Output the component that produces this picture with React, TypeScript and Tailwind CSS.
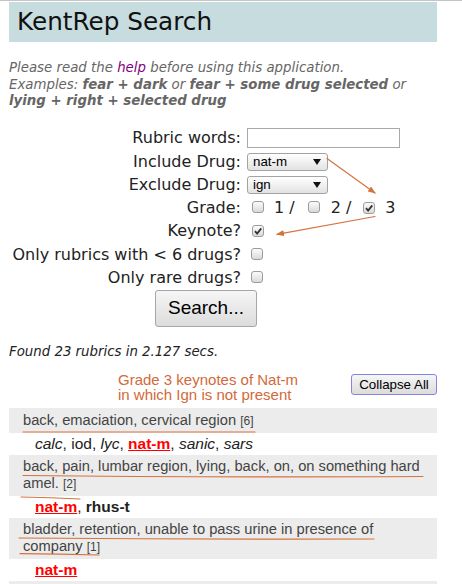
import React from 'react'

// KentRep search page with result list and hand-drawn annotations

type Drug = { name: string; style: 'italic' | 'plain' | 'hit' | 'bold' }

interface Rubric {
    text: string
    count: number
    drugs: Drug[]
}

const rubrics: Rubric[] = [
    {
        text: 'back, emaciation, cervical region',
        count: 6,
        drugs: [
            { name: 'calc', style: 'italic' },
            { name: 'iod', style: 'plain' },
            { name: 'lyc', style: 'italic' },
            { name: 'nat-m', style: 'hit' },
            { name: 'sanic', style: 'italic' },
            { name: 'sars', style: 'italic' },
        ],
    },
    {
        text: 'back, pain, lumbar region, lying, back, on, on something hard amel.',
        count: 2,
        drugs: [
            { name: 'nat-m', style: 'hit' },
            { name: 'rhus-t', style: 'bold' },
        ],
    },
    {
        text: 'bladder, retention, unable to pass urine in presence of company',
        count: 1,
        drugs: [{ name: 'nat-m', style: 'hit' }],
    },
]

function Box({ checked }: { checked?: boolean }) {
    return (
        <span className="inline-flex h-[12px] w-[12px] shrink-0 items-center justify-center rounded-[3px] border border-[#9c9c9c] bg-linear-to-b from-[#fbfbfb] to-[#dadada]">
            {checked && (
                <svg width="10" height="10" viewBox="0 0 10 10">
                    <path d="M2 5.2 L4.1 7.6 L8.3 2.4" fill="none" stroke="#333" strokeWidth="1.8" />
                </svg>
            )}
        </span>
    )
}

function FakeSelect({ value }: { value: string }) {
    return (
        <div className="flex h-[18px] w-[81px] items-center justify-between rounded-[3px] border border-[#a3a3a3] bg-linear-to-b from-[#ffffff] to-[#e2e2e2] pl-[5px] pr-[6px] font-['Liberation_Sans',Arial,sans-serif] text-[13.33px] text-black">
            <span>{value}</span>
            <svg width="8" height="6" viewBox="0 0 8 6">
                <path d="M0 0 H8 L4 6 Z" fill="#111" />
            </svg>
        </div>
    )
}

function Row({ label, children }: { label: string; children: React.ReactNode }) {
    return (
        <>
            <div className="flex h-[23.3px] items-center justify-end pr-[6px] whitespace-nowrap">{label}</div>
            <div className="flex h-[23.3px] items-center">{children}</div>
        </>
    )
}

function DrugName({ drug }: { drug: Drug }) {
    if (drug.style === 'hit') return <span className="font-bold text-[#ff0000] underline">{drug.name}</span>
    if (drug.style === 'bold') return <span className="font-bold">{drug.name}</span>
    if (drug.style === 'italic') return <span className="italic">{drug.name}</span>
    return <span>{drug.name}</span>
}

export default function App() {
    return (
        <div className="relative min-h-[584px] w-[462px] overflow-hidden border-t border-[#c4c4c4] bg-white font-['DejaVu_Sans',sans-serif] text-[#222]">
            <div className="ml-[9px] w-[428px] pt-px">
                {/* Header */}
                <div className="flex h-[40px] items-center bg-[#c6dcdf] pl-[8px] text-[24.7px] text-[#111]">
                    KentRep Search
                </div>

                <p className="mt-[18px] text-[13.33px] leading-[16.7px] italic text-[#666]">
                    Please read the <span className="text-[#800080]">help</span> before using this application.
                    <br />
                    Examples: <b>fear + dark</b> or <b>fear + some drug selected</b> or <b>lying + right + selected drug</b>
                </p>

                {/* Search form */}
                <div className="mt-[16.5px] grid grid-cols-[238px_1fr] text-[16px]">
                    <Row label="Rubric words:">
                        <div className="h-[20px] w-[153px] border border-[#a9a9a9] bg-white" />
                    </Row>
                    <Row label="Include Drug:">
                        <FakeSelect value="nat-m" />
                    </Row>
                    <Row label="Exclude Drug:">
                        <FakeSelect value="ign" />
                    </Row>
                    <Row label="Grade:">
                        <span className="ml-[5px]"><Box /></span>
                        <span className="ml-[10px]">1 /</span>
                        <span className="ml-[13px]"><Box /></span>
                        <span className="ml-[11px]">2 /</span>
                        <span className="ml-[12px]"><Box checked /></span>
                        <span className="ml-[10px]">3</span>
                    </Row>
                    <Row label="Keynote?">
                        <span className="ml-[5px]"><Box checked /></span>
                    </Row>
                    <Row label="Only rubrics with < 6 drugs?">
                        <span className="ml-[4px]"><Box /></span>
                    </Row>
                    <Row label="Only rare drugs?">
                        <span className="ml-[4px]"><Box /></span>
                    </Row>
                </div>

                <button className="ml-[146px] h-[37px] w-[102px] rounded-[3px] border border-[#a6a6a6] bg-linear-to-b from-[#f6f6f6] to-[#dcdcdc] font-['Liberation_Sans',Arial,sans-serif] text-[19px] text-black">
                    Search...
                </button>

                <p className="mt-[17px] text-[13.33px] leading-[16.7px] italic text-[#222]">
                    Found 23 rubrics in 2.127 secs.
                </p>

                {/* Results heading */}
                <div className="mt-[12px] flex items-start font-['Liberation_Sans',Arial,sans-serif]">
                    <div className="ml-[109px] text-[15px] leading-[15px] text-[#d2693a]">
                        Grade 3 keynotes of Nat-m
                        <br />
                        in which Ign is not present
                    </div>
                    <button className="mt-[2px] ml-auto h-[21px] w-[86px] rounded-[3px] border-[1.5px] border-[#8484e4] bg-linear-to-b from-[#f6f6f6] to-[#dcdcdc] text-[13.33px] text-black">
                        Collapse All
                    </button>
                </div>

                {/* Rubric list */}
                <div className="mt-[6px] font-['Liberation_Sans',Arial,sans-serif]">
                    {rubrics.map((r) => (
                        <div key={r.text}>
                            <div className="bg-[#ececec] py-[3.5px] pr-[14px] pl-[14px] text-[14.7px] leading-[16.5px] text-[#444]">
                                {r.text} <span className="text-[12px]">[{r.count}]</span>
                            </div>
                            <div className="h-[22px] pl-[26px] text-[15.5px] leading-[22px] text-[#222]">
                                {r.drugs.map((d, i) => (
                                    <React.Fragment key={d.name}>
                                        {i > 0 && ', '}
                                        <DrugName drug={d} />
                                    </React.Fragment>
                                ))}
                            </div>
                        </div>
                    ))}
                    <div className="h-[24px] bg-[#ececec]" />
                </div>
            </div>

            {/* Hand-drawn annotations */}
            <svg className="pointer-events-none absolute top-0 left-0" width="462" height="584" viewBox="0 0 462 584">
                <defs>
                    <marker id="head" markerWidth="8" markerHeight="6" refX="7" refY="3" orient="auto" markerUnits="userSpaceOnUse">
                        <path d="M0 0 L8 3 L0 6 Z" fill="#d4733d" />
                    </marker>
                </defs>
                <g fill="none" stroke="#d4733d" strokeWidth="1.2" strokeLinecap="round">
                    <line x1="327" y1="157.5" x2="375" y2="192" markerEnd="url(#head)" />
                    <line x1="375" y1="215.5" x2="277" y2="233.3" markerEnd="url(#head)" />
                    <path d="M23 431 L255 431" />
                    <path d="M23 474.5 Q200 476.5 423 475.5" />
                    <path d="M21 496 Q50 496.5 80 498" />
                    <path d="M19 537 Q200 538.5 374 538" />
                    <path d="M20 552.7 Q60 553 99 554" />
                </g>
            </svg>
        </div>
    )
}
